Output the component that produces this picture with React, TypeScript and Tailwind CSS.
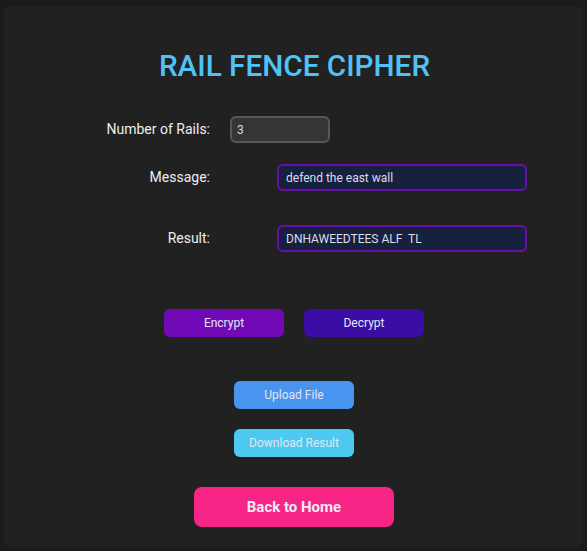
import { useState } from 'react';

function railFence(text: string, rails: number) {
  if (rails < 2) return text;
  const rows: string[] = Array.from({ length: rails }, () => '');
  let r = 0;
  let dir = 1;
  for (const ch of text) {
    rows[r] += ch;
    if (r === 0) dir = 1;
    else if (r === rails - 1) dir = -1;
    r += dir;
  }
  return rows.join('');
}

export default function App() {
  const [rails, setRails] = useState('3');
  const [message, setMessage] = useState('defend the east wall');
  const [result, setResult] = useState('DNHAWEEDTEES ALF  TL');

  return (
    <div
      className="min-h-[551px] bg-[#1b1b1b] px-[4px] pt-[6px] pb-[4px]"
      style={{ fontFamily: 'Roboto, "Noto Sans", sans-serif' }}
    >
      <div className="h-[541px] rounded-[8px] bg-[#212121] pt-[42px] flex flex-col">
        <h1 className="text-center text-[29.7px] leading-[36px] font-medium text-[#4fc3f7] pl-[2px]">
          RAIL FENCE CIPHER
        </h1>

        {/* Form rows */}
        <div className="mt-[32px] flex items-center">
          <label className="w-[206px] text-right text-[14px] text-[#eeeeee]">Number of Rails:</label>
          <input
            value={rails}
            onChange={(e) => setRails(e.target.value)}
            className="ml-[20px] w-[100px] h-[27px] rounded-[6px] border-2 border-[#555759] bg-[#333537] px-[5px] text-[12px] text-[#d8d8d8] outline-none"
          />
        </div>

        <div className="mt-[21px] flex items-center">
          <label className="w-[206px] text-right text-[14px] text-[#eeeeee]">Message:</label>
          <input
            value={message}
            onChange={(e) => setMessage(e.target.value)}
            className="ml-[67px] w-[250px] h-[27px] rounded-[6px] border-2 border-[#6a0dad] bg-[#16213e] px-[7px] text-[12px] text-[#dcdcec] outline-none"
          />
        </div>

        <div className="mt-[34px] flex items-center">
          <label className="w-[206px] text-right text-[14px] text-[#eeeeee]">Result:</label>
          <input
            value={result}
            readOnly
            className="ml-[67px] w-[250px] h-[27px] rounded-[6px] border-2 border-[#6a0dad] bg-[#16213e] px-[7px] text-[12px] text-[#dcdcec] outline-none whitespace-pre"
          />
        </div>

        {/* Actions */}
        <div className="mt-[57px] flex justify-center gap-[20px] pl-[1px]">
          <button
            onClick={() => setResult(railFence(message, parseInt(rails) || 3).toUpperCase())}
            className="w-[120px] h-[28px] rounded-[6px] bg-[#7209b7] text-[12px] text-[#e4e4f4]"
          >
            Encrypt
          </button>
          <button className="w-[120px] h-[28px] rounded-[6px] bg-[#3a0ca3] text-[12px] text-[#e4e4f4]">
            Decrypt
          </button>
        </div>

        <div className="mt-[44px] flex flex-col items-center pl-[1px]">
          <button className="w-[120px] h-[28px] rounded-[6px] bg-[#4895ef] text-[12px] text-[#e4e4f4]">
            Upload File
          </button>
          <button className="mt-[20px] w-[120px] h-[28px] rounded-[6px] bg-[#4cc9f0] text-[12px] text-[#e4e4f4]">
            Download Result
          </button>
          <button className="mt-[30px] w-[200px] h-[40px] rounded-[8px] bg-[#f72585] text-[15px] font-bold text-[#ececf4]">
            Back to Home
          </button>
        </div>
      </div>
    </div>
  );
}
